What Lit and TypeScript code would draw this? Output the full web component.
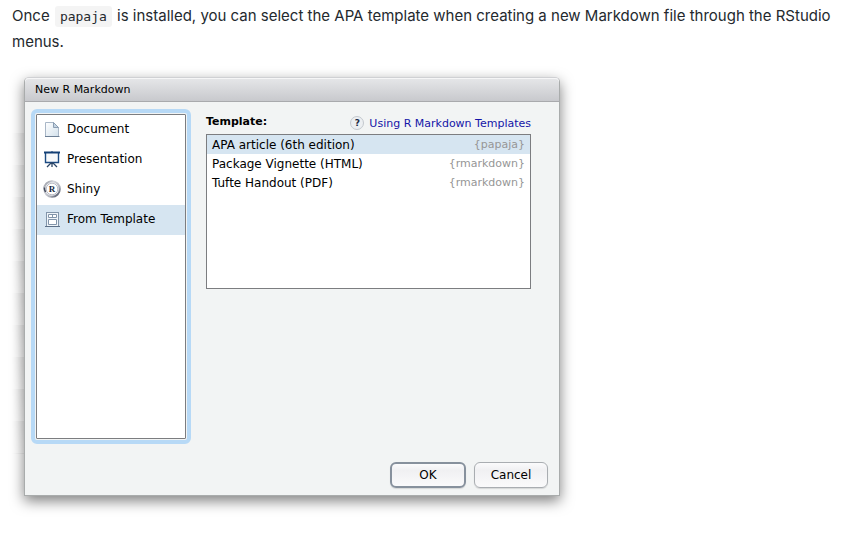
import { LitElement, html, css, svg } from "lit";
import { customElement, state } from "lit/decorators.js";

const documentIcon = svg`
  <defs>
    <linearGradient id="page" x1="0" y1="0" x2="1" y2="1">
      <stop offset="0" stop-color="#ffffff" />
      <stop offset="1" stop-color="#d3e1ec" />
    </linearGradient>
  </defs>
  <path d="M2.500 2.500H10.500L15.500 7.500V16.500H2.500Z" fill="url(#page)" stroke="#a9b7c7" />
  <path d="M10.500 2.500V7.500H15.500Z" fill="#c4d4e2" stroke="#8b9db2" />
  <path d="M2 16.500H16.500" stroke="#6d7f95" />`;

const presentationIcon = svg`
  <path d="M2.500 3V12.500H15.500V3" fill="#f7f9fb" stroke="#1b4a82" stroke-width="1.400" />
  <path d="M1 2.500H17" stroke="#123f75" stroke-width="2" />
  <path d="M9 1V3" stroke="#123f75" />
  <path d="M9 12.500V17M8.500 12.500L4 17M9.500 12.500L14 17" fill="none" stroke="#2b4566" stroke-width="1.300" />`;

const shinyIcon = svg`
  <defs>
    <linearGradient id="ring" x1="0" y1="0" x2="1" y2="1">
      <stop offset="0" stop-color="#80848f" />
      <stop offset="0.300" stop-color="#d4d6dc" />
      <stop offset="0.650" stop-color="#b4b7c0" />
      <stop offset="1" stop-color="#343b50" />
    </linearGradient>
  </defs>
  <circle cx="9" cy="9" r="7.800" fill="#f4f5f7" stroke="url(#ring)" stroke-width="2" />
  <path d="M1.400 7.500A8 8 0 0 0 2.600 12" fill="none" stroke="#434a5c" stroke-width="1.600" />
  <circle cx="9" cy="9" r="5.800" fill="#ffffff" stroke="#a9acb6" stroke-width="0.800" />
  <text x="9" y="12" text-anchor="middle" class="r">R</text>`;

const templateIcon = svg`
  <rect x="3.500" y="2.500" width="12" height="14" fill="#f0f5f9" stroke="#8295aa" />
  <path d="M2 16.500H17" stroke="#5d7088" />
  <path d="M5.500 4.500H13.500V7.500H5.500ZM9.500 4.500V7.500M5.500 9.500H13.500V14.500H5.500Z" fill="#ffffff" stroke="#8295aa" />`;

const kinds = [
  { name: "Document", icon: documentIcon },
  { name: "Presentation", icon: presentationIcon },
  { name: "Shiny", icon: shinyIcon },
  { name: "From Template", icon: templateIcon },
];

const templates = [
  { name: "APA article (6th edition)", pkg: "{papaja}" },
  { name: "Package Vignette (HTML)", pkg: "{rmarkdown}" },
  { name: "Tufte Handout (PDF)", pkg: "{rmarkdown}" },
];

@customElement("new-markdown-dialog")
export class NewMarkdownDialog extends LitElement {
  @state() private kind = 3;
  @state() private template = 0;

  static styles = css`
    :host {
      display: block;
      position: relative;
      font: 12px/16px "DejaVu Sans", "Liberation Sans", sans-serif;
      color: #000;
    }
    :host::before {
      content: "";
      position: absolute;
      left: -12px;
      top: 56px;
      bottom: 42px;
      width: 12px;
      background: repeating-linear-gradient(to bottom, rgb(0 0 0 / 6%) 0, transparent 32px);
      mask-image: linear-gradient(to right, transparent, #000);
    }
    .window {
      box-sizing: border-box;
      position: relative;
      border: 1px solid #a9acac;
      border-top-color: #d0d1d4;
      border-radius: 5px 5px 0 0;
      background: #f2f4f4;
      box-shadow: 0 5px 14px rgb(0 0 0 / 50%);
    }
    .title {
      margin: 0;
      padding: 4px 10px 3px;
      border-bottom: 1px solid #a9aaad;
      border-radius: 4px 4px 0 0;
      background: linear-gradient(#e6e7e9, #c8c9cd);
      box-shadow: inset 0 1px #f6f6f7;
      font-size: 11px;
      font-weight: normal;
    }
    .body {
      display: grid;
      grid-template-columns: 150px 1fr;
      gap: 20px;
      padding: 12px 28px 0 11px;
    }
    .list {
      box-sizing: border-box;
      border: 1px solid #7c7d80;
      background: #fff;
    }
    .kinds {
      min-height: 325px;
      outline: 4px solid #b7d9f6;
      outline-offset: 1px;
      border-radius: 1px;
    }
    .list button {
      display: flex;
      align-items: center;
      width: 100%;
      border: 0;
      background: none;
      color: inherit;
      font: inherit;
      text-align: left;
    }
    .list button[aria-selected="true"] {
      background: #d6e5f1;
    }
    .kinds button {
      height: 30px;
      padding: 0 6px 2px;
      gap: 6px;
    }
    .kinds svg {
      flex: none;
      width: 18px;
      height: 18px;
    }
    .r {
      font: bold 9px "Liberation Serif", serif;
      fill: #20283e;
    }
    .head {
      display: flex;
      align-items: center;
      justify-content: space-between;
      height: 20px;
    }
    .head h3 {
      margin: 0;
      padding-bottom: 4px;
      font-size: 11px;
    }
    .help {
      display: flex;
      align-items: center;
      gap: 5px;
      font-size: 11px;
    }
    .help a {
      color: #1414a8;
      text-decoration: none;
    }
    .mark {
      box-sizing: border-box;
      width: 14px;
      height: 14px;
      margin-bottom: 2px;
      border: 1px solid #c3c8ce;
      border-radius: 50%;
      background: #eceff2;
      color: #1d2c44;
      font-size: 9px;
      font-weight: bold;
      line-height: 12px;
      text-align: center;
    }
    .templates {
      min-height: 155px;
    }
    .templates button {
      justify-content: space-between;
      height: 19px;
      padding: 0 5px;
    }
    .pkg {
      color: #969696;
      font-size: 11px;
    }
    .actions {
      display: flex;
      justify-content: flex-end;
      gap: 8px;
      padding: 23px 11px 7px;
    }
    .actions button {
      box-sizing: border-box;
      min-width: 74px;
      height: 26px;
      padding: 0 8px;
      border: 1px solid #a9adb1;
      border-radius: 6px;
      background: linear-gradient(#fbfbfc, #f0f0f2 30%, #fafafb);
      box-shadow: 0 1px 1px rgb(0 0 0 / 12%);
      color: inherit;
      font: inherit;
    }
    .actions .default {
      min-width: 76px;
      border: 2px solid #87919d;
    }
  `;

  render() {
    return html`
      <section class="window" role="dialog" aria-labelledby="title">
        <h2 class="title" id="title">New R Markdown</h2>
        <div class="body">
          <div class="list kinds" role="listbox" aria-label="Document type">
            ${kinds.map(
              (k, i) => html`<button
                role="option"
                aria-selected=${i === this.kind ? "true" : "false"}
                @click=${() => (this.kind = i)}
              ><svg viewBox="0 0 18 18" aria-hidden="true">${k.icon}</svg><span>${k.name}</span></button>`
            )}
          </div>
          <div>
            <div class="head">
              <h3 id="template">Template:</h3>
              <div class="help">
                <span class="mark" aria-hidden="true">?</span>
                <a href="#templates">Using R Markdown Templates</a>
              </div>
            </div>
            <div class="list templates" role="listbox" aria-labelledby="template">
              ${templates.map(
                (t, i) => html`<button
                  role="option"
                  aria-selected=${i === this.template ? "true" : "false"}
                  @click=${() => (this.template = i)}
                ><span>${t.name}</span><span class="pkg">${t.pkg}</span></button>`
              )}
            </div>
          </div>
        </div>
        <div class="actions">
          <button class="default">OK</button>
          <button>Cancel</button>
        </div>
      </section>
    `;
  }
}

@customElement("app-root")
export class AppRoot extends LitElement {
  static styles = css`
    :host {
      display: block;
      padding: 3px 12px 40px;
      background: #fff;
      color: #24292e;
      font: 15px/26px Inter, "Liberation Sans", sans-serif;
    }
    p {
      margin: 0 0 22px;
    }
    code {
      margin: 0 1px;
      padding: 3px 5px;
      border-radius: 3px;
      background: #f4f4f4;
      font: 13px "DejaVu Sans Mono", "Liberation Mono", monospace;
    }
    new-markdown-dialog {
      max-width: 536px;
      margin-left: 12px;
    }
  `;

  render() {
    return html`
      <p>
        Once <code>papaja</code> is installed, you can select the APA template when creating a new
        Markdown file through the RStudio menus.
      </p>
      <new-markdown-dialog></new-markdown-dialog>
    `;
  }
}
